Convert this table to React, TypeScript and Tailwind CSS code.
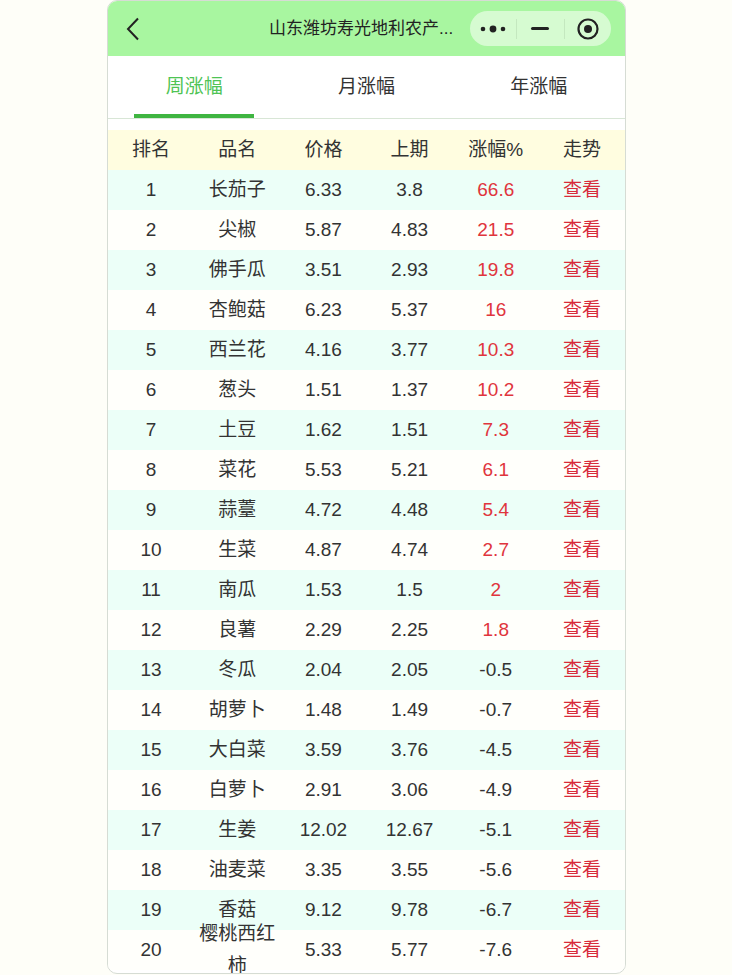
import { useState } from "react";

const rows = [
  ["1", "长茄子", "6.33", "3.8", "66.6"],
  ["2", "尖椒", "5.87", "4.83", "21.5"],
  ["3", "佛手瓜", "3.51", "2.93", "19.8"],
  ["4", "杏鲍菇", "6.23", "5.37", "16"],
  ["5", "西兰花", "4.16", "3.77", "10.3"],
  ["6", "葱头", "1.51", "1.37", "10.2"],
  ["7", "土豆", "1.62", "1.51", "7.3"],
  ["8", "菜花", "5.53", "5.21", "6.1"],
  ["9", "蒜薹", "4.72", "4.48", "5.4"],
  ["10", "生菜", "4.87", "4.74", "2.7"],
  ["11", "南瓜", "1.53", "1.5", "2"],
  ["12", "良薯", "2.29", "2.25", "1.8"],
  ["13", "冬瓜", "2.04", "2.05", "-0.5"],
  ["14", "胡萝卜", "1.48", "1.49", "-0.7"],
  ["15", "大白菜", "3.59", "3.76", "-4.5"],
  ["16", "白萝卜", "2.91", "3.06", "-4.9"],
  ["17", "生姜", "12.02", "12.67", "-5.1"],
  ["18", "油麦菜", "3.35", "3.55", "-5.6"],
  ["19", "香菇", "9.12", "9.78", "-6.7"],
  ["20", "樱桃西红柿", "5.33", "5.77", "-7.6"],
];

const tabs = ["周涨幅", "月涨幅", "年涨幅"];

const App = () => {
  const [active, setActive] = useState(0);

  return (
    <div
      className="h-[975px] overflow-hidden bg-[#fefef8] text-[#333]"
      style={{ fontFamily: '"Liberation Sans", Arial, "Noto Sans CJK SC", sans-serif' }}
    >
      <div className="ml-[107px] w-[519px] h-[974px] rounded-[10px] border border-[#d6dcd4] overflow-hidden bg-white">
        {/* Header */}
        <div className="h-[55px] bg-[#a8f6a0] flex items-center relative">
          <button className="pl-[18px] pr-2">
            <svg width="14" height="24" viewBox="0 0 14 24" fill="none" stroke="#222" strokeWidth="2">
              <path d="M12 1.5 L2 12 L12 22.5" />
            </svg>
          </button>
          <div className="absolute left-[161px] top-0 h-full flex items-center text-[17px] text-[#222]">
            山东潍坊寿光地利农产...
          </div>
          <div className="ml-auto mr-[14px] h-[35px] w-[141px] rounded-full bg-[#d6fbd1] flex items-center">
            <div className="flex-1 flex justify-center">
              <svg width="26" height="8" viewBox="0 0 26 8" fill="#222">
                <circle cx="3" cy="4" r="2.3" />
                <circle cx="13" cy="4" r="3.4" />
                <circle cx="23" cy="4" r="2.3" />
              </svg>
            </div>
            <div className="w-px h-[20px] bg-[#c4e8bf]" />
            <div className="flex-1 flex justify-center">
              <div className="w-[18px] h-[3px] bg-[#222] rounded-sm" />
            </div>
            <div className="w-px h-[20px] bg-[#c4e8bf]" />
            <div className="flex-1 flex justify-center">
              <svg width="22" height="22" viewBox="0 0 22 22" fill="none">
                <circle cx="11" cy="11" r="9.5" stroke="#222" strokeWidth="2.2" />
                <circle cx="11" cy="11" r="4" fill="#222" />
              </svg>
            </div>
          </div>
        </div>

        {/* Tabs */}
        <div className="h-[63px] grid grid-cols-3 border-b border-[#d8e6d6]">
          {tabs.map((t, i) => (
            <button
              key={t}
              onClick={() => setActive(i)}
              className={`relative flex items-center justify-center text-[19px] ${
                active === i ? "text-[#4fc455]" : "text-[#333]"
              }`}
            >
              {t}
              {active === i && (
                <span className="absolute bottom-0 left-[26px] w-[120px] h-[4px] bg-[#3fb541]" />
              )}
            </button>
          ))}
        </div>

        {/* Table */}
        <div className="mt-[11px] text-[19px]">
          <div className="grid grid-cols-6 grid-rows-[40px] bg-[#fffde0] items-center text-center">
            {["排名", "品名", "价格", "上期", "涨幅%", "走势"].map((h) => (
              <div key={h}>{h}</div>
            ))}
          </div>
          {rows.map((r, i) => {
            const up = !r[4].startsWith("-");
            return (
              <div
                key={r[0]}
                className={`grid grid-cols-6 grid-rows-[40px] items-center text-center ${
                  i % 2 === 0 ? "bg-[#ecfff8]" : "bg-[#fffffb]"
                }`}
              >
                <div>{r[0]}</div>
                <div className="leading-8 px-[3px]">{r[1]}</div>
                <div>{r[2]}</div>
                <div>{r[3]}</div>
                <div className={up ? "text-[#e0353d]" : ""}>{r[4]}</div>
                <div className="text-[#d82b3a]">查看</div>
              </div>
            );
          })}
        </div>
      </div>
    </div>
  );
};

export default App;
